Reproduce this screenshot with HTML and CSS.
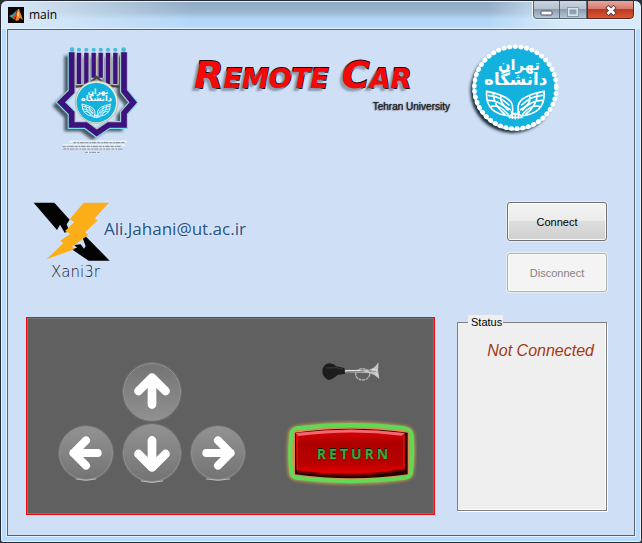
FILE: index.html
```html
<!DOCTYPE html>
<html lang="en">
<head>
<meta charset="utf-8">
<title>main</title>
<link rel="stylesheet" href="styles.css">
</head>
<body>
<div class="window">
  <header class="titlebar">
    <svg class="app-icon" viewBox="0 0 16 16" aria-hidden="true">
      <rect width="16" height="16" fill="#0a0605"/>
      <path d="M1 9 5 7 9 3 7 9 4 11Z" fill="#4795ac"/>
      <path d="M4 11 7 8 10 2 11 2 11 14 8 10 6 13Z" fill="#c9451a"/>
      <path d="M10 2 11 2 15 13 12 11 9 14 7 13 9 9Z" fill="#f2841f"/>
      <path d="M10 3 11 8 10 11 9 8Z" fill="#ffd089"/>
    </svg>
    <span class="caption">main</span>
    <div class="window-buttons">
      <button class="win-btn minimize" type="button" aria-label="Minimize">
        <svg width="14" height="8" viewBox="0 0 14 8"><rect x="1" y="3" width="11" height="4" rx="1" fill="#fff" stroke="#4c5360"/></svg>
      </button>
      <button class="win-btn maximize" type="button" aria-label="Maximize" disabled>
        <svg width="12" height="10" viewBox="0 0 12 10"><rect x="1.500" y="1.500" width="9" height="7" fill="none" stroke="#d8e2ea" stroke-width="2"/><rect x=".5" y=".5" width="11" height="9" fill="none" stroke="#8798a8"/><rect x="4" y="4" width="4" height="2" fill="none" stroke="#8798a8"/></svg>
      </button>
      <button class="win-btn close" type="button" aria-label="Close">
        <svg width="12" height="11" viewBox="0 0 12 11"><path d="M2 1.500 10 9.500M10 1.500 2 9.500" stroke="#4c3440" stroke-width="4.500"/><path d="M2.500 2 9.500 9M9.500 2 2.500 9" stroke="#fff" stroke-width="2.800"/></svg>
      </button>
    </div>
  </header>

  <main class="client">
    <section class="banner">
      <svg class="emblem" viewBox="0 0 300 375" role="img" aria-label="University emblem">
        <defs>
          <filter id="soft" x="-20%" y="-20%" width="140%" height="140%"><feGaussianBlur stdDeviation="5"/></filter>
          <g id="seal">
            <circle cx="169" cy="158" r="121" fill="#13b1de"/>
            <g fill="#fff" font-family="DejaVu Sans" font-weight="700" text-anchor="middle">
              <text x="180" y="104" font-size="44">تهران</text>
              <text x="170" y="151" font-size="50">دانشگاه</text>
            </g>
            <g fill="none" stroke="#fff" stroke-width="5" stroke-linecap="round">
              <path d="M83 169Q77 235 151 243Q164 241 160 211Q154 182 83 169ZM255 169Q261 235 188 243Q174 241 178 211Q184 182 255 169Z"/>
              <path d="M88 181Q125 184 150 210M87 196Q122 196 147 225M97 214Q123 208 147 238M103 177Q104 212 137 237M126 185Q120 206 154 224M250 181Q213 184 188 210M251 196Q216 196 191 225M241 214Q215 208 191 238M235 177Q234 212 201 237M212 185Q218 206 184 224"/>
              <path d="M151 247H189M160 237V250M169 235V251M178 237V250M157 231 169 240 181 231"/>
            </g>
          </g>
        </defs>
        <g transform="translate(-13 10)" fill="none" stroke="#27313c" filter="url(#soft)" opacity=".8">
          <path d="M65 52V170L33 202 65 234V270H108L140 294 176 270H222V234L250 202 222 168V52" stroke-width="18"/>
          <path d="M87 55V148M109 55V148M131 55V135M152 55V135M174 55V145M196 55V148" stroke-width="7"/>
        </g>
        <g fill="none" stroke="#c5bda9" stroke-width="17">
          <path d="M89 55V149M111 55V149M133 55V130M154 55V130M176 55V149M198 55V149"/>
        </g>
        <g fill="none" stroke="#3b127e" stroke-width="13">
          <path d="M87 53V147M109 53V147M131 53V128M152 53V128M174 53V147M196 53V147"/>
        </g>
        <path d="M65 52V170L33 202 65 234V270H108L140 294 176 270H222V234L250 202 222 168V52" fill="none" stroke="#80ddea" stroke-width="24"/>
        <path d="M66 52V170L34 202 66 234V269H109L141 292 176 269H221V234L249 202 221 168V52" fill="none" stroke="#c5bda9" stroke-width="19"/>
        <path d="M65 52V170L33 202 65 234V270H108L140 294 176 270H222V234L250 202 222 168V52" fill="none" stroke="#3b127e" stroke-width="17"/>
        <path d="M77 155 112 152 140 126 168 152 207 155" fill="none" stroke="#4a4145" stroke-width="7"/>
        <g fill="#46bedb"><circle cx="66" cy="44" r="7"/><circle cx="87" cy="44" r="6"/><circle cx="109" cy="44" r="6"/><circle cx="131" cy="44" r="6"/><circle cx="152" cy="44" r="6"/><circle cx="174" cy="44" r="6"/><circle cx="196" cy="44" r="6"/><circle cx="221" cy="44" r="7"/></g>
        <circle cx="140" cy="201" r="64" fill="#e8ecdc" stroke="#a9a48f" stroke-width="2"/>
        <use href="#seal" transform="translate(56 125) scale(.49)"/>
        <path d="M58 319H232M38 330H225M55 340H215M105 352H150" stroke="#fff" stroke-width="5" stroke-dasharray="17 2 9 1" opacity=".7"/>
        <path d="M70 323H224M38 334H212M40 342H218M105 352H149" stroke="#80868d" stroke-width="3" stroke-dasharray="9 3 5 2 14 3"/>
      </svg>

      <div class="headline">
        <h1>Remote Car</h1>
        <p>Tehran University</p>
      </div>

      <svg class="seal" viewBox="0 0 330 330" role="img" aria-label="University of Tehran seal">
        <circle cx="160" cy="168" r="126" fill="#1d2b38" filter="url(#soft)"/>
        <circle cx="169" cy="158" r="129" fill="#b6e1ec"/>
        <use href="#seal"/>
        <circle cx="169" cy="158" r="123" fill="none" stroke="#fff" stroke-width="14" stroke-linecap="round" stroke-dasharray="1 16"/>
      </svg>
    </section>

    <section class="contact">
      <svg class="brand" viewBox="0 0 240 264" role="img" aria-label="Xani3r">
        <path d="M2 2H64L110 53 101 67 109 88 95 92 81 68 72 84Z" fill="#030303"/>
        <path d="M149 109 157 102 230 176H167L116 142 132 137 124 129 143 127 153 140 158 132Z" fill="#030303"/>
        <path d="M152 2 228 2 184 50 194 55 156 91 166 99 117 134 126 141 40 172 91 124 82 116 112 95 96 87 124 60 110 52Z" fill="#fbae17"/>
        <text x="54" y="224" font-family="DejaVu Sans, sans-serif" font-size="45" font-weight="200" fill="#202020">Xani3r</text>
      </svg>
      <a class="email" href="mailto:Ali.Jahani@ut.ac.ir">Ali.Jahani@ut.ac.ir</a>
      <div class="connection">
        <button class="push" type="button">Connect</button>
        <button class="push" type="button" disabled>Disconnect</button>
      </div>
    </section>

    <section class="controls" aria-label="Driving controls">
      <div class="dpad">
        <button class="arrow up" type="button" aria-label="Forward">
          <svg viewBox="0 0 58 58"><path d="M29 42V15M15 28 29 14 43 28"/></svg>
        </button>
        <button class="arrow left" type="button" aria-label="Left">
          <svg viewBox="0 0 58 58"><path d="M42 29H15M29 15 15 29 29 43"/><path class="base" d="M18 58Q29 61 40 58"/></svg>
        </button>
        <button class="arrow down" type="button" aria-label="Backward">
          <svg viewBox="0 0 58 58"><path d="M29 16V43M15 30 29 44 43 30"/><path class="base" d="M18 58Q29 61 40 58"/></svg>
        </button>
        <button class="arrow right" type="button" aria-label="Right">
          <svg viewBox="0 0 58 58"><path d="M16 29H43M29 15 43 29 29 43"/><path class="base" d="M16 58Q29 61 42 58"/></svg>
        </button>
      </div>
      <div class="actions">
        <button class="horn" type="button" aria-label="Horn">
          <svg viewBox="0 0 180 66">
            <ellipse cx="125" cy="40" rx="21" ry="17" fill="none" stroke="#b6b6b6" stroke-width="4" stroke-dasharray="9 2"/>
            <path d="M72 27 145 26 160 19 173 4 171 27 175 54 160 42 145 36 72 34Z" fill="#c4c4c4"/>
            <path d="M76 32 130 31M143 30H165" stroke="#4b4b4b" stroke-width="2"/>
            <path d="M75 29H118M153 27H168M165 37 171 44" stroke="#efefef" stroke-width="3"/>
            <path d="M4 30Q6 8 27 7Q40 9 46 16L70 21 72 38 49 42Q36 56 22 57Q4 48 4 30Z" fill="#1d1d1d"/>
            <path d="M14 21 45 20 66 25" fill="none" stroke="#3a3a3a" stroke-width="3"/>
          </svg>
        </button>
        <button class="return" type="button">
          <svg viewBox="0 0 396 204" aria-hidden="true">
            <defs>
              <linearGradient id="red" x2="0" y2="1"><stop offset="0" stop-color="#e20000"/><stop offset=".3" stop-color="#ae0000"/><stop offset=".75" stop-color="#b80000"/><stop offset="1" stop-color="#e80000"/></linearGradient>
              <filter id="glow"><feGaussianBlur stdDeviation="4"/></filter>
            </defs>
            <path d="M34 22Q198-2 362 22Q384 28 384 48Q389 103 382 158Q381 172 360 177Q198 200 34 177Q14 174 14 156Q8 103 14 45Q15 26 34 22Z" fill="#ca9b42" stroke="#b39950" stroke-width="10" filter="url(#glow)"/>
            <path d="M34 25Q198 5 360 25Q379 29 380 46Q384 103 378 158Q377 170 360 173Q198 194 36 173Q20 172 19 156Q12 103 19 45Q20 29 34 25Z" fill="#d89050" stroke="#60d957" stroke-width="12"/>
            <path d="M30 38Q198 15 368 38V163Q198 187 30 163Z" fill="#240000"/>
            <path d="M32 39Q198 18 359 39V149Q198 173 36 155Z" fill="url(#red)"/>
            <path d="M32 39Q198 18 359 39L350 47Q198 27 40 48Z" fill="#f16773"/>
            <path d="M36 42V149M357 43V144" stroke="#ff1510" stroke-width="3"/>
            <path d="M38 154Q198 178 358 149" fill="none" stroke="#700000" stroke-width="7"/>
          </svg>
          <span>RETURN</span>
        </button>
      </div>
    </section>

    <fieldset class="status">
      <legend>Status</legend>
      <output>Not Connected</output>
    </fieldset>
  </main>
</div>
</body>
</html>
```
FILE: styles.css
```css
* {
  box-sizing: border-box;
}

body {
  margin: 0;
  background: #2a2f38;
  color: #000;
  font: 11px "Liberation Sans", Arial, sans-serif;
}

button {
  padding: 0;
  font: inherit;
}

svg {
  display: block;
}

.window {
  display: flex;
  flex-direction: column;
  min-height: 100vh;
  padding: 0 6px 6px;
  border: 1px solid #242a35;
  border-radius: 7px 7px 3px 3px;
  background:
    linear-gradient(90deg, #dcebf8 0, #ffffff00 30%) top / 100% 28px no-repeat,
    linear-gradient(90deg, #ffffff00 76%, #d8ebfb 88%) top / 100% 28px no-repeat,
    linear-gradient(#8fa9c2 0, #9ab6d0 40%, #b4d7f6 65%, #b7dafa 100%) top / 100% 28px no-repeat,
    #b7dbfc;
  box-shadow: inset 0 0 0 1px #e5f3fe;
}

.titlebar {
  display: flex;
  align-items: flex-start;
  height: 28px;
}

.app-icon {
  width: 16px;
  height: 16px;
  margin: 6px 5px 0 1px;
}

.caption {
  margin-top: 5px;
  font: 12px/17px "Open Sans", sans-serif;
}

.window-buttons {
  display: flex;
  margin-left: auto;
  border: 1px solid #edf5fb;
  border-top: 0;
  border-radius: 0 0 5px 5px;
  overflow: hidden;
}

.win-btn {
  display: grid;
  place-items: center;
  width: 27px;
  height: 18px;
  padding-top: 4px;
  border: 0;
  border-right: 1px solid #5a6876;
  border-bottom: 1px solid #5a6876;
  background: linear-gradient(#cbd5df 0, #b3c0cc 48%, #8a9cad 50%, #b5c8da 100%);
}

.minimize {
  border-left: 1px solid #5a6876;
  border-radius: 0 0 0 4px;
}

.close {
  width: 47px;
  padding-top: 1px;
  border: 1px solid #60262a;
  border-top: 0;
  border-radius: 0 0 4px;
  background: linear-gradient(#e7a79c 0, #d6796b 47%, #bd3824 50%, #d8592f 100%);
}

.client {
  flex: 1;
  display: grid;
  grid-template-columns: 1fr 150px;
  grid-template-rows: 172px 115px auto;
  align-content: start;
  column-gap: 22px;
  padding: 0 27px 20px 18px;
  border: 1px solid #56636f;
  background: #cedff6;
  box-shadow: 0 0 0 1px #e2f1fd;
}

.banner,
.contact {
  grid-column: 1 / -1;
  display: flex;
  align-items: flex-start;
}

.emblem {
  width: 100px;
  height: 125px;
  margin: 5px 0 0 24px;
}

.headline {
  width: 276px;
  margin: 22px 20px 0 44px;
}

h1 {
  margin: 0;
  color: #f40808;
  font: italic 700 38px/46px "DejaVu Sans", sans-serif;
  font-variant: small-caps;
  white-space: nowrap;
  -webkit-text-stroke: 2px #240808;
  paint-order: stroke fill;
  text-shadow: -3px 3px 2px #8e9caf;
}

.headline p {
  margin: 2px 20px 0 0;
  color: #252126;
  font-size: 10px;
  line-height: 14px;
  text-align: right;
  text-shadow: 0 0 1px #252126, -1px 1px 1px #a59da3;
}

.seal {
  width: 110px;
  height: 110px;
  margin: 5px 0 0 -31px;
}

.brand {
  width: 80px;
  height: 88px;
  margin-left: 7px;
}

.email {
  margin: 14px 0 0 -9px;
  color: #285184;
  font: 17px/26px "Open Sans", sans-serif;
  text-decoration: none;
  text-shadow: -1px 0 1px #e3eef8;
}

.connection {
  display: grid;
  gap: 12px;
  width: 100px;
  margin-left: auto;
}

.push {
  height: 39px;
  border: 1px solid #707070;
  border-radius: 3px;
  background: linear-gradient(#f3f3f3 0, #ebebeb 49%, #dddddd 50%, #cfcfcf 100%);
  box-shadow: inset 0 0 0 1px #fbfbfb, 0 0 0 1px #e9edf2;
  color: #000;
}

.push:disabled {
  border-color: #adb2b5;
  background: #f4f4f4;
  color: #838383;
}

.controls {
  display: flex;
  justify-content: space-between;
  min-height: 198px;
  padding: 43px 17px 26px 26px;
  border: 1px solid #f30b0b;
  background: #606060;
  box-shadow: inset 0 0 0 1px #777;
}

.dpad {
  display: grid;
  grid-template-columns: repeat(3, 66px);
  grid-template-rows: 61px 61px;
  place-items: center;
}

.arrow {
  width: 58px;
  height: 58px;
  border: 1px solid #929292;
  border-radius: 50%;
  background: linear-gradient(#929292, #747474);
  box-shadow: 0 0 0 1px #6f6f6f;
}

.arrow svg {
  width: 100%;
  overflow: visible;
  fill: none;
  stroke: #fff;
  stroke-width: 9px;
  stroke-linecap: round;
  stroke-linejoin: round;
}

.arrow .base {
  stroke: #c4c4c4;
  stroke-width: 1px;
}

.up {
  grid-column: 2;
  background: linear-gradient(#747474, #909090);
}

.left,
.right {
  width: 54px;
  height: 54px;
}

.left {
  grid-column: 1;
}

.actions {
  display: flex;
  flex-direction: column;
  align-items: center;
  justify-content: space-between;
}

.horn {
  width: 60px;
  border: 0;
  background: none;
}

.return {
  display: grid;
  place-items: center;
  width: 132px;
  border: 0;
  background: none;
}

.return > * {
  grid-area: 1 / 1;
}

.return svg {
  width: 100%;
}

.return span {
  padding-left: 6px;
  color: #43a63b;
  font: 700 14px/20px "Open Sans", sans-serif;
  letter-spacing: 3px;
  text-shadow: -1px -1px 0 #101a0d;
}

.status {
  min-width: 0;
  margin: -2px 0 4px;
  padding: 0 12px;
  border: 1px solid #7f7f7f;
  background: #efefef;
  box-shadow: inset -1px -1px 0 #fff, 1px 1px 0 #fff;
}

.status legend {
  margin-left: -2px;
  padding: 0 1px 0 3px;
  background: #efefef;
  line-height: 14px;
}

.status output {
  display: block;
  margin-top: 12px;
  color: #a23b12;
  font-size: 16px;
  font-style: italic;
  line-height: 20px;
  text-align: right;
}
```
